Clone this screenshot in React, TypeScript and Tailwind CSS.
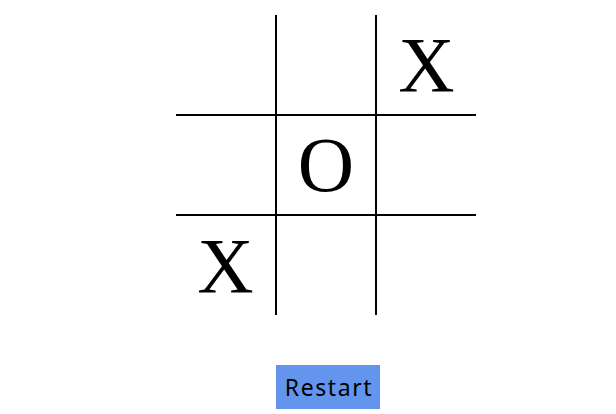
import React, { useState } from "react";

const initial: (string | null)[] = [null, null, "X", null, "O", null, "X", null, null];

// border per cell: inner lines only, 1px on each side -> 2px line
const cellBorders = [
  "border-r border-b",
  "border-l border-r border-b",
  "border-l border-b",
  "border-r border-t border-b",
  "border-l border-r border-t border-b",
  "border-l border-t border-b",
  "border-r border-t",
  "border-l border-r border-t",
  "border-l border-t",
];

export default function App() {
  const [board, setBoard] = useState(initial);

  return (
    <div className="min-h-[414px] w-[616px] bg-white pl-[176px] pt-[15px]">
      <div className="grid w-[300px] grid-cols-[100px_100px_100px] grid-rows-[100px_100px_100px]">
        {board.map((v, i) => (
          <div
            key={i}
            className={`flex items-center justify-center border-black text-[78px] leading-none text-black ${cellBorders[i]}`}
            style={{ fontFamily: '"Liberation Serif", "Times New Roman", serif' }}
          >
            {v}
          </div>
        ))}
      </div>
      <div className="mt-[50px] pl-[100px]">
        <button
          onClick={() => setBoard(Array(9).fill(null))}
          className="h-[44px] w-[104px] bg-[#6495ed] pl-[2px] text-[23px] tracking-[1.6px] text-black"
          style={{ fontFamily: '"Noto Sans", sans-serif' }}
        >
          Restart
        </button>
      </div>
    </div>
  );
}
